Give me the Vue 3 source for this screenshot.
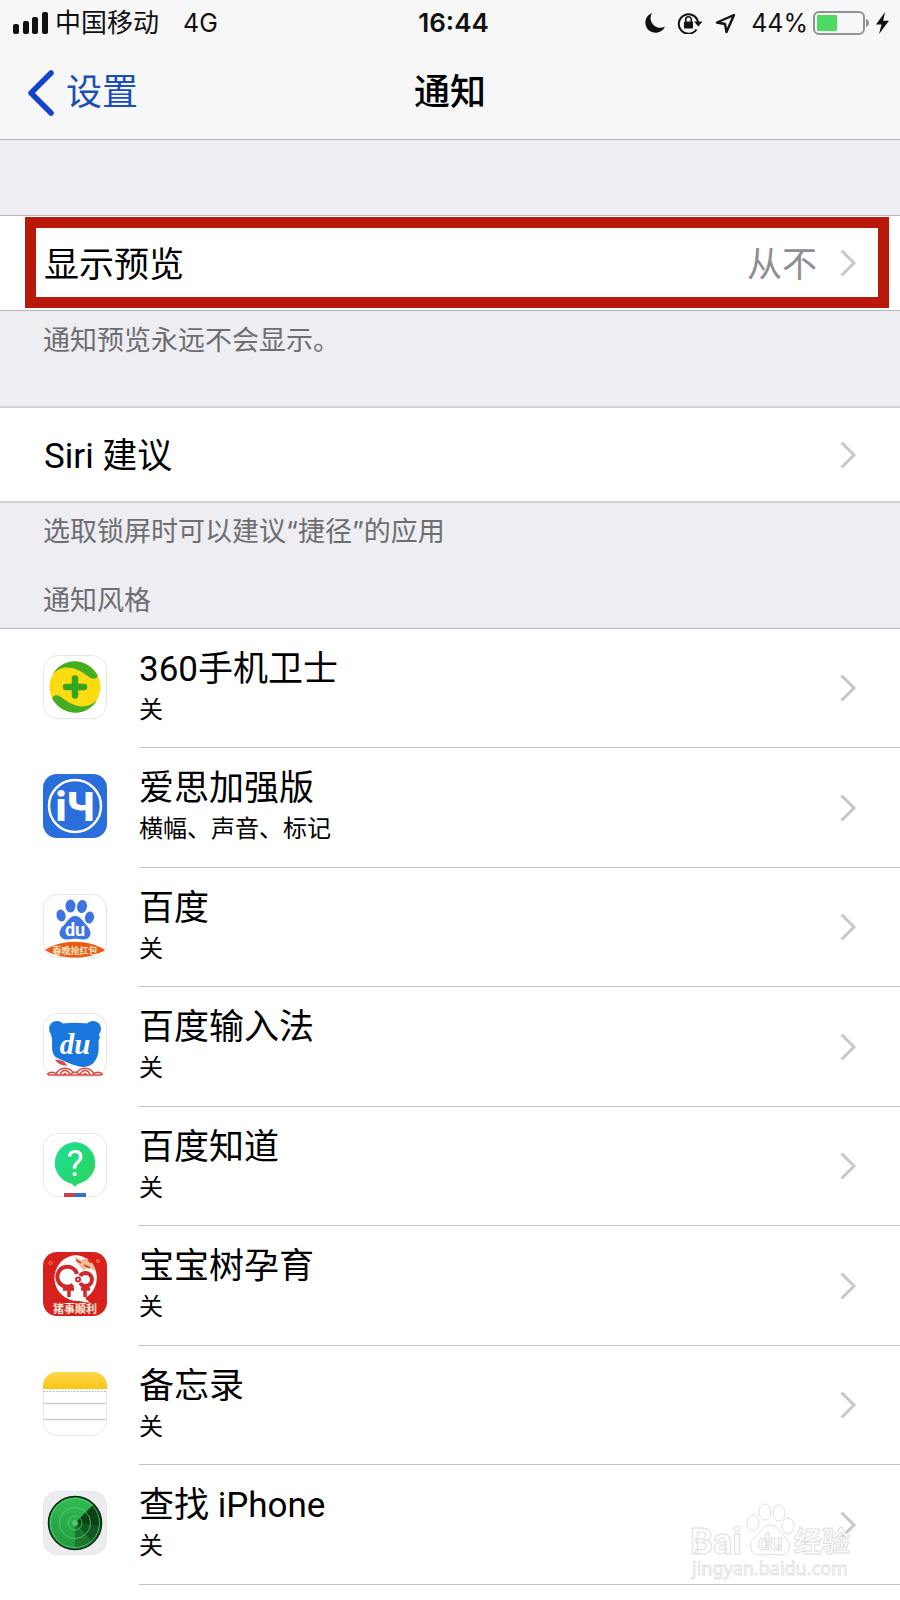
<template>
  <div class="page">
    <header class="top">
      <div class="status">
        <div class="status-left">
          <svg class="signal" width="36" height="22" viewBox="0 0 36 22">
            <rect x="0" y="12" width="6" height="10" rx="2" />
            <rect x="10" y="9" width="6" height="13" rx="2" />
            <rect x="19" y="5" width="6" height="17" rx="2" />
            <rect x="29" y="0" width="6" height="22" rx="2" />
          </svg>
          <span class="carrier">中国移动</span>
          <span class="network">4G</span>
        </div>
        <div class="time">16:44</div>
        <div class="status-right">
          <svg class="moon" width="20" height="20" viewBox="0 0 20 20">
            <path d="M7 0A10.2 10.2 0 1 0 20 13.4A9.6 9.6 0 0 1 7 0Z" />
          </svg>
          <svg class="lock" width="26" height="22" viewBox="0 0 26 22">
            <path d="M19.5 17.5A9.7 9.7 0 1 1 21 10" fill="none" stroke="#111" stroke-width="2" />
            <path d="M17 9.5h8.5l-4.2 5z" />
            <rect x="7" y="9.500" width="9" height="7" rx="1" />
            <path d="M8.700 10V7.500a2.800 2.800 0 0 1 5.600 0V10" fill="none" stroke="#111" stroke-width="1.600" />
          </svg>
          <svg class="arrow" width="21" height="21" viewBox="0 0 21 21">
            <path d="M19 2L2 9.500L10 11L11.500 19Z" fill="none" stroke="#111" stroke-width="2.400" stroke-linejoin="round" />
          </svg>
          <span class="percent">44%</span>
          <svg class="battery" width="57" height="24" viewBox="0 0 57 24">
            <rect x="1" y="1" width="50" height="22" rx="5" fill="none" stroke="#929294" stroke-width="2" />
            <rect x="4" y="4" width="20" height="16" rx="1" fill="#4cd964" />
            <path d="M53 8c4 1 4 7 0 8z" fill="#929294" />
          </svg>
          <svg class="bolt" width="13" height="22" viewBox="0 0 13 22">
            <path d="M9 0L0 12.500h5.500L3 22L13 8.800H7.200Z" />
          </svg>
        </div>
      </div>
      <nav class="nav">
        <a href="#" class="back">
          <svg width="28" height="46" viewBox="0 0 28 46">
            <path d="M24 3L4 23L24 43" fill="none" stroke="#1443cb" stroke-width="5.500" stroke-linecap="round" stroke-linejoin="round" />
          </svg>
          <span>设置</span>
        </a>
        <h1 class="title">通知</h1>
      </nav>
    </header>

    <section class="group first">
      <a href="#" class="row">
        <span class="row-label">显示预览</span>
        <span class="row-value">从不</span>
        <svg class="chevron" width="17" height="28" viewBox="0 0 17 28"><path d="M1.500 1.500L14 14L1.500 26.500" /></svg>
      </a>
      <div class="highlight"></div>
    </section>
    <p class="note preview-note">通知预览永远不会显示。</p>

    <section class="group soft">
      <a href="#" class="row">
        <span class="row-label">Siri 建议</span>
        <svg class="chevron" width="17" height="28" viewBox="0 0 17 28"><path d="M1.500 1.500L14 14L1.500 26.500" /></svg>
      </a>
    </section>
    <div class="notes">
      <p class="note">选取锁屏时可以建议“捷径”的应用</p>
      <h2 class="note">通知风格</h2>
    </div>

    <ul class="apps">
      <li v-for="app in apps" :key="app.id">
        <a href="#" class="app">
          <svg class="app-icon" width="64" height="64" viewBox="0 0 64 64">
            <g v-if="app.id === 'safe'">
              <rect class="tile" x="0.500" y="0.500" width="63" height="63" rx="14" />
              <circle cx="32" cy="32" r="25.500" fill="#fbdc12" />
              <path d="M10 19C18 4 41 0 54 19C56 24 50 25 46 22C36 14 22 7 10 19Z" fill="#44ad24" />
              <path d="M54 45C46 60 23 64 10 45C8 40 14 39 18 42C28 50 42 57 54 45Z" fill="#44ad24" />
              <path d="M32 23.500v17M23 32h18" stroke="#35a51e" stroke-width="6.500" stroke-linecap="round" />
            </g>
            <g v-else-if="app.id === 'i4'">
              <rect width="64" height="64" rx="14" fill="#2a6edb" />
              <circle cx="32" cy="32" r="26" fill="none" stroke="#fff" stroke-width="2.500" />
              <text x="32" y="47" text-anchor="middle" font-size="40" font-weight="900" fill="#fff" class="latin">iЧ</text>
            </g>
            <g v-else-if="app.id === 'baidu'">
              <rect class="tile" x="0.500" y="0.500" width="63" height="63" rx="14" />
              <g fill="#3d74e3">
                <ellipse cx="27.500" cy="12" rx="5" ry="6.500" />
                <ellipse cx="39" cy="12.500" rx="5" ry="6.500" transform="rotate(10 39 12.500)" />
                <ellipse cx="18" cy="21.500" rx="4.500" ry="6" transform="rotate(-15 18 21.500)" />
                <ellipse cx="46.500" cy="23.500" rx="4.500" ry="6" transform="rotate(10 46.500 23.500)" />
                <path d="M32 22C38 22 40 28 45 33C50 39 47 46 40 45.500C34 44.500 31 44.500 25 45.500C17 46 14 39 19 33C24 29 26 22 32 22Z" />
              </g>
              <text x="32" y="42" text-anchor="middle" font-size="18" font-weight="700" fill="#fff" class="latin">du</text>
              <path d="M2 56C18 45 46 45 62 56C48 66 16 66 2 56Z" fill="#ec5b14" />
              <text x="32" y="60" text-anchor="middle" font-size="9" font-weight="700" fill="#ffe7c4">春晚抢红包</text>
            </g>
            <g v-else-if="app.id === 'input'">
              <rect class="tile" x="0.500" y="0.500" width="63" height="63" rx="14" />
              <g fill="#1976dc">
                <circle cx="14" cy="16" r="8" />
                <circle cx="50" cy="16" r="8" />
                <path d="M14 12C24 9 40 9 50 12L57 24C54 29 57 33 55 41C53 50 47 54 40 54C30 53 22 48 14 45C6 40 11 29 8 22Z" />
              </g>
              <text x="32" y="41" text-anchor="middle" font-size="29" font-weight="700" font-style="italic" fill="#fff" class="serif">du</text>
              <path d="M12 47C18 46 22 48 24 53C18 52 15 51 12 47Z" fill="#d94a4a" />
              <g fill="#fff" stroke="#dd4a3c" stroke-width="1.500">
                <path d="M4 61.500Q9 57 14 61.500M50 61.500Q55 57 60 61.500" />
                <path d="M13 62C15 53 29 53 31 62M33 62C35 53 49 53 51 62" />
                <path d="M17 62C19 56 25 56 27 62M37 62C39 56 45 56 47 62M27 62Q32 56 37 62" />
                <path d="M20.500 62Q22 59 23.500 62M40.500 62Q42 59 43.500 62M5 62H59" />
              </g>
            </g>
            <g v-else-if="app.id === 'zhidao'">
              <defs>
                <linearGradient id="zhidao-fill" x1="0" y1="0" x2="1" y2="1">
                  <stop offset="0" stop-color="#1fdc98" />
                  <stop offset="1" stop-color="#2bd45a" />
                </linearGradient>
              </defs>
              <rect class="tile" x="0.500" y="0.500" width="63" height="63" rx="14" />
              <path d="M32 9A21 21 0 0 1 39 49.500C36 50.500 34 51 32 54C30 51 28 50.500 25 49.500A21 21 0 0 1 32 9Z" fill="url(#zhidao-fill)" />
              <text x="32" y="43" text-anchor="middle" font-size="36" fill="#fff" class="latin">?</text>
              <rect x="21" y="60" width="11" height="4" fill="#d33f4d" />
              <rect x="32" y="60" width="11" height="4" fill="#2f6fd6" />
            </g>
            <g v-else-if="app.id === 'babytree'">
              <rect width="64" height="64" rx="14" fill="#d8201f" />
              <path d="M33 3A23 23 0 0 1 42 46L47 51L36 49A23 23 0 1 1 33 3Z" fill="#fff" />
              <path d="M31 4L38 8L44 6L50 12L53 19L46 16L40 18L35 12Z" fill="#f3bd8f" />
              <path d="M33 8l5 3M41 13l6 3M45 8l3 3" stroke="#cf3c30" stroke-width="1.500" />
              <g fill="none" stroke="#cf2a2b" stroke-width="4">
                <path d="M34 22A10 10 0 1 0 30 33" />
                <path d="M37 24A6.500 6.500 0 1 1 37 31" />
                <path d="M20 37H31M26 37V45M38 37H47M42 37V45" stroke-width="3.500" />
                <circle cx="35" cy="27.500" r="2" stroke-width="2" />
              </g>
              <circle cx="7.500" cy="11" r="1.500" fill="none" stroke="#f08d4c" />
              <circle cx="55" cy="9" r="1.500" fill="none" stroke="#f08d4c" />
              <text x="32" y="61" text-anchor="middle" font-size="11" font-weight="700" fill="#fff0dd">猪事顺利</text>
            </g>
            <g v-else-if="app.id === 'notes'">
              <defs>
                <linearGradient id="notes-fill" x1="0" y1="0" x2="0" y2="1">
                  <stop offset="0" stop-color="#fed84a" />
                  <stop offset="1" stop-color="#fac518" />
                </linearGradient>
              </defs>
              <rect class="tile" x="0.500" y="0.500" width="63" height="63" rx="14" />
              <path d="M0 17V14A14 14 0 0 1 14 0H50A14 14 0 0 1 64 14V17Z" fill="url(#notes-fill)" />
              <path d="M1 19.500H63" stroke="#b5b0a2" stroke-dasharray="1.500 1.500" />
              <path d="M1 31.500H63M1 47.500H63" stroke="#cfcfcf" stroke-width="1.500" />
            </g>
            <g v-else>
              <defs>
                <linearGradient id="radar-fill" x1="0" y1="0" x2="0" y2="1">
                  <stop offset="0" stop-color="#33ba55" />
                  <stop offset="1" stop-color="#229a40" />
                </linearGradient>
              </defs>
              <rect class="tile gray" x="0.500" y="0.500" width="63" height="63" rx="14" />
              <circle cx="32" cy="32" r="26.500" fill="url(#radar-fill)" stroke="#07230d" stroke-width="1.500" />
              <path d="M32 32L50.500 13.500A26 26 0 0 1 57.500 36Z" fill="#0b4218" />
              <path d="M32 32L57.500 36A26 26 0 0 1 49 51Z" fill="#115722" />
              <path d="M32 32L49 51A26 26 0 0 1 32 58Z" fill="#1a7630" />
              <g fill="none" stroke="#5ed873" opacity="0.700">
                <circle cx="32" cy="32" r="7" />
                <circle cx="32" cy="32" r="15.500" />
                <circle cx="32" cy="32" r="24.500" />
              </g>
              <circle cx="32" cy="32" r="3" fill="#4fc766" />
            </g>
          </svg>
          <span class="app-body">
            <span class="app-text">
              <span class="app-name">{{ app.name }}</span>
              <span class="app-state">{{ app.state }}</span>
            </span>
            <svg class="chevron" width="17" height="28" viewBox="0 0 17 28"><path d="M1.500 1.500L14 14L1.500 26.500" /></svg>
          </span>
        </a>
      </li>
    </ul>

    <svg class="watermark" width="166" height="84" viewBox="0 0 166 84">
      <g fill="#fff" stroke="#d8d8d8">
        <text x="0" y="52" font-size="36" font-weight="700" class="latin">Bai</text>
        <ellipse cx="75" cy="10" rx="6" ry="8" />
        <ellipse cx="89" cy="11" rx="6" ry="8" />
        <ellipse cx="63" cy="21" rx="6" ry="8" />
        <ellipse cx="98" cy="24" rx="6" ry="8" />
        <path d="M80 23C87 23 90 30 96 36C103 44 99 53 90 53C83 52 77 52 71 53C61 54 57 44 64 36C71 30 73 23 80 23Z" />
        <text x="80" y="48" font-size="22" font-weight="700" text-anchor="middle" class="latin">du</text>
        <text x="104" y="50" font-size="28" font-weight="700">经验</text>
        <text x="2" y="73" font-size="18" stroke-width="0.800" class="domain">jingyan.baidu.com</text>
      </g>
    </svg>
  </div>
</template>

<script setup>
const apps = [
  { id: 'safe', name: '360手机卫士', state: '关' },
  { id: 'i4', name: '爱思加强版', state: '横幅、声音、标记' },
  { id: 'baidu', name: '百度', state: '关' },
  { id: 'input', name: '百度输入法', state: '关' },
  { id: 'zhidao', name: '百度知道', state: '关' },
  { id: 'babytree', name: '宝宝树孕育', state: '关' },
  { id: 'notes', name: '备忘录', state: '关' },
  { id: 'find', name: '查找 iPhone', state: '关' }
];
</script>

<style>
body {
  margin: 0;
  background: #fff;
}
</style>

<style scoped>
.page {
  position: relative;
  min-height: 100vh;
  background: #fff;
  color: #000;
  font-family: Roboto, "Noto Sans CJK SC", sans-serif;
  overflow: hidden;
}
a {
  color: inherit;
  text-decoration: none;
}
svg {
  display: block;
  flex: none;
}
.top {
  background: #f7f7f8;
  border-bottom: 1px solid #b4b3b9;
}
.status {
  display: grid;
  grid-template-columns: 1fr auto 1fr;
  align-items: center;
  height: 46px;
  padding: 0 11px 0 13px;
  font-family: Inter, "Noto Sans CJK SC", sans-serif;
  font-size: 25px;
  line-height: 36px;
  color: #111;
  fill: #111;
}
.status-left,
.status-right {
  display: flex;
  align-items: center;
}
.status-right {
  justify-content: flex-end;
}
.carrier {
  margin-left: 6px;
  font-size: 26px;
}
.network {
  margin-left: 24px;
}
.time {
  padding-left: 5px;
  font-size: 26px;
  font-weight: 600;
}
.moon,
.lock {
  margin-right: 12px;
}
.arrow {
  margin-right: 15px;
}
.battery {
  margin: 0 6px 0 5px;
}
.nav {
  display: grid;
  grid-template-columns: 1fr auto 1fr;
  align-items: center;
  height: 93px;
  padding: 0 27px;
  font-size: 36px;
  line-height: 48px;
}
.back {
  display: flex;
  align-items: center;
  gap: 11px;
  color: #1b4fb6;
}
.title {
  margin: 0;
  font-size: 36px;
  font-weight: 500;
}
.group {
  position: relative;
  background: #fff;
  border-top: 1px solid #b8b7bc;
  border-bottom: 1px solid #b8b7bc;
}
.group.first {
  box-shadow: 0 -75px 0 #eeedf2;
  margin-top: 75px;
}
.group.soft {
  border-width: 2px 0;
  border-color: #d2d2d5;
}
.row {
  display: flex;
  align-items: center;
  height: 94px;
  padding: 0 43px 0 44px;
  font-size: 35px;
  line-height: 48px;
}
.soft .row {
  height: 93px;
}
.row-label,
.row-value {
  padding-top: 5px;
}
.row-label {
  flex: 1;
}
.row-value {
  margin-right: 23px;
  color: #8e8e93;
}
.chevron {
  fill: none;
  stroke: #c7c7cc;
  stroke-width: 3;
}
.highlight {
  position: absolute;
  top: 1px;
  right: 11px;
  bottom: 2px;
  left: 25px;
  border: 11px solid #b9190b;
  pointer-events: none;
}
.note {
  margin: 0;
  font-family: Inter, "Noto Sans CJK SC", sans-serif;
  font-size: 27px;
  font-weight: 400;
  line-height: 36px;
  color: #6d6d72;
}
.preview-note {
  padding: 12px 43px 47px;
  background: #eeedf2;
}
.notes {
  display: grid;
  gap: 33px;
  padding: 11px 43px 9px;
  background: #eeedf2;
}
.apps {
  list-style: none;
  margin: 0;
  padding: 0;
  border-top: 1px solid #b8b7bc;
}
.app {
  display: flex;
  align-items: center;
  padding-left: 43px;
}
.app-icon {
  margin: 0 32px 4px 0;
  font-family: "Noto Sans CJK SC", sans-serif;
}
.tile {
  fill: #fff;
  stroke: #e6e6e6;
}
.tile.gray {
  fill: #ebebf0;
}
.latin {
  font-family: Roboto, sans-serif;
}
.serif {
  font-family: "Liberation Serif", serif;
}
.domain {
  font-family: "Noto Sans", sans-serif;
}
.app-body {
  flex: 1;
  display: flex;
  align-items: center;
  justify-content: space-between;
  box-sizing: border-box;
  height: 119px;
  padding-right: 43px;
  border-bottom: 1px solid #c2c1c6;
}
.apps li:nth-child(even) .app-body {
  height: 120px;
}
.app-text {
  padding-top: 3px;
}
.app-name,
.app-state {
  display: block;
  line-height: 40px;
}
.app-name {
  font-size: 35px;
}
.app-state {
  font-size: 24px;
}
.watermark {
  position: absolute;
  right: 44px;
  bottom: 14px;
  font-family: "Noto Sans CJK SC", sans-serif;
  opacity: 0.8;
}
</style>
